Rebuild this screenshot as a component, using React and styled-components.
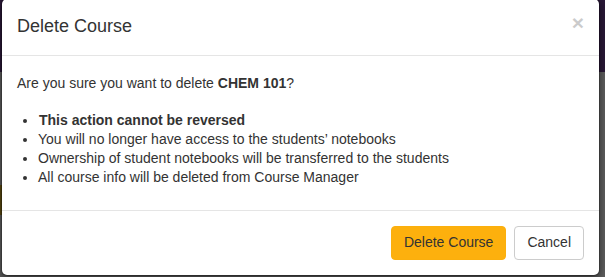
import React from 'react';
import styled, { createGlobalStyle } from 'styled-components';

const GlobalStyle = createGlobalStyle`
  html, body {
    margin: 0;
    padding: 0;
  }
  body {
    font-family: 'Liberation Sans', Arial, sans-serif;
    color: #333;
    overflow: hidden;
  }
`;

const notes = [
  { text: 'This action cannot be reversed', strong: true },
  { text: 'You will no longer have access to the students\u2019 notebooks' },
  { text: 'Ownership of student notebooks will be transferred to the students' },
  { text: 'All course info will be deleted from Course Manager' },
];

const App = () => {
  return (
    <>
      <GlobalStyle />
      <Backdrop>
        <Modal>
          <Header>
            <Title>Delete Course</Title>
            <CloseButton aria-label="Close">×</CloseButton>
          </Header>
          <Body>
            <Question>
              Are you sure you want to delete <strong>CHEM 101</strong>?
            </Question>
            <NoteList>
              {notes.map((item, index) => (
                <NoteItem key={index} strong={item.strong}>
                  {item.text}
                </NoteItem>
              ))}
            </NoteList>
          </Body>
          <Footer>
            <Button variant="warning">Delete Course</Button>
            <Button>Cancel</Button>
          </Footer>
        </Modal>
      </Backdrop>
    </>
  );
};

const Backdrop = styled.div`
  width: 605px;
  height: 277px;
  overflow: hidden;
  background:
    linear-gradient(to bottom, transparent 185px, #5c4a10 185px, #5c4a10 215px, transparent 215px) left top / 2px 100% no-repeat,
    linear-gradient(to bottom, #2a1838 0, #2a1838 72px, #5f5f5f 72px, #5f5f5f 100%);
`;

const Modal = styled.div`
  width: 599px;
  margin: -2px 0 0 1px;
  box-sizing: border-box;
  background-color: #fff;
  border: 1px solid rgba(0, 0, 0, 0.2);
  border-radius: 6px;
  box-shadow: 0 3px 9px rgba(0, 0, 0, 0.5);
  background-clip: padding-box;
`;

const Header = styled.div`
  display: flex;
  justify-content: space-between;
  align-items: flex-start;
  padding: 15px;
  border-bottom: 1px solid #e5e5e5;
`;

const Title = styled.h4`
  margin: 0;
  font-size: 18px;
  font-weight: 500;
  line-height: 1.42857;
  color: #333;
`;

const CloseButton = styled.button`
  margin-top: -2px;
  margin-right: 0;
  padding: 0;
  border: 0;
  background: transparent;
  font-family: 'Liberation Sans', Arial, sans-serif;
  font-size: 21px;
  font-weight: 700;
  line-height: 1;
  color: #000;
  opacity: 0.2;
  cursor: pointer;
`;

const Body = styled.div`
  padding: 17px 15px 15px;
  font-size: 14px;
`;

const Question = styled.p`
  margin: 0 0 18px;
  line-height: 20px;

  strong {
    font-weight: 700;
  }
`;

const NoteList = styled.ul`
  margin: 0 0 8px;
  padding-left: 21px;
`;

const NoteItem = styled.li`
  line-height: 19px;
  font-weight: ${({ strong }) => (strong ? 700 : 400)};
  padding-left: ${({ strong }) => (strong ? '1px' : '0')};
`;

const Footer = styled.div`
  display: flex;
  justify-content: flex-end;
  gap: 8px;
  padding: 15px;
  border-top: 1px solid #e5e5e5;
`;

const Button = styled.button`
  padding: 6px 12px;
  font-family: 'Liberation Sans', Arial, sans-serif;
  font-size: 14px;
  line-height: 1.42857;
  border-radius: 4px;
  border: 1px solid ${({ variant }) => (variant === 'warning' ? '#fbaf0d' : '#ccc')};
  background-color: ${({ variant }) => (variant === 'warning' ? '#fdb00d' : '#fff')};
  color: #333;
  cursor: pointer;
`;

export default App;
